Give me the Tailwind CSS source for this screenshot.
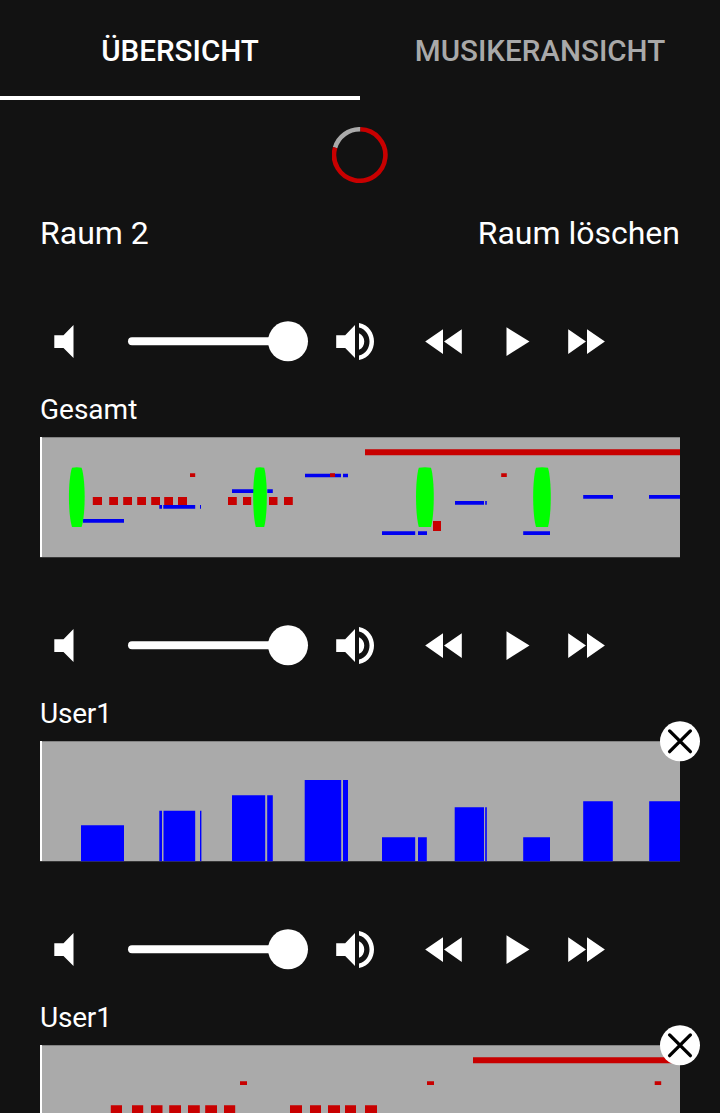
<!DOCTYPE html>
<html lang="de">
<head>
<meta charset="utf-8">
<title>Übersicht</title>
<script src="https://cdn.jsdelivr.net/npm/@tailwindcss/browser@4"></script>
</head>
<body class="bg-[#121212] text-white font-['Roboto',sans-serif] h-[1113px] overflow-hidden">
<svg class="hidden">
  <symbol id="low" viewBox="54 321 20 40"><path d="M54.3 335.2H63.5L73.5 325V358L63.5 348H54.3Z" fill="#fff"/></symbol>
  <symbol id="loud" viewBox="336 321 40 40"><path d="M336.2 335.2H345.2L355 325V358L345.2 348H336.2Z" fill="#fff"/><path d="M359 333.2C366 336 366 347 359 349.8ZM359 323C379 327 379 356 359 360V355.6C373 352 373 331 359 327.4Z" fill="#fff"/></symbol>
  <symbol id="rew" viewBox="425 321 38 40"><path d="M425.2 341.6L443 329.2V354ZM444 341.6L461.8 329.2V354Z" fill="#fff"/></symbol>
  <symbol id="play" viewBox="506 321 24 40"><path d="M506.5 327.2L529.5 341.6L506.5 356Z" fill="#fff"/></symbol>
  <symbol id="fwd" viewBox="568 321 38 40"><path d="M568.2 329.2L586 341.6L568.2 354ZM587 329.2L604.9 341.6L587 354Z" fill="#fff"/></symbol>
  <symbol id="x" viewBox="0 0 40 41"><circle cx="20" cy="20.3" r="20" fill="#fff"/><path d="M9.6 9.9L30.4 30.7M30.4 9.9L9.6 30.7" stroke="#000" stroke-width="3.3" stroke-linecap="round"/></symbol>
</svg>

<nav class="flex h-[100px] text-[29.6px] font-medium leading-[33px]">
  <div class="w-1/2 flex justify-center pt-[35px] border-b-4 border-white"><span>ÜBERSICHT</span></div>
  <div class="w-1/2 flex justify-center pt-[35px] text-[#a9a9a9]"><span>MUSIKERANSICHT</span></div>
</nav>

<main class="px-10">
  <div class="flex justify-center pt-[27px]">
    <svg class="w-14 h-14" viewBox="0 0 56 56" fill="none" stroke-width="4.6">
      <path d="M3.1 20.6A25.7 25.7 0 0 1 28.4 2.3" stroke="#aaa"/>
      <path d="M28.4 2.3A25.7 25.7 0 1 1 3.1 20.6" stroke="#c80000"/>
    </svg>
  </div>
  <header class="flex justify-between mt-[31px] h-[38px] text-[32px] leading-[38px]">
    <span>Raum 2</span><span>Raum löschen</span>
  </header>

  <section class="mt-[69px] h-[304px]">
    <div class="flex h-10 pl-[14px]">
      <svg class="w-5 h-10"><use href="#low"/></svg>
      <div class="ml-[54px] w-[180px] h-10 flex items-center translate-y-[0.3px]"><div class="w-[142px] h-[8.6px] rounded-l-full bg-white"></div><div class="-ml-[2px] size-10 shrink-0 rounded-full bg-white"></div></div>
      <svg class="ml-7 w-10 h-10"><use href="#loud"/></svg>
      <svg class="ml-[49px] w-[38px] h-10"><use href="#rew"/></svg>
      <svg class="ml-[43px] w-6 h-10"><use href="#play"/></svg>
      <svg class="ml-[38px] w-[38px] h-10"><use href="#fwd"/></svg>
    </div>
    <h2 class="mt-8 h-[33px] text-[28px] leading-[33px]">Gesamt</h2>
    <svg class="mt-[11px] block w-[640px] h-[121px]" viewBox="40 437 640 121">
      <path fill="#aaa" d="M40 437.3H680V557.3H40Z"/>
      <path fill="#fff" d="M40 437H42V557H40Z"/>
      <g fill="#0000f0">
        <path d="M83 519H124V522.8H83ZM159.3 505H162V508.8H159.3ZM163.3 505H195.2V508.8H163.3ZM200 505H201V508.8H200ZM232 489.2H265.6V492.9H232ZM267.3 489.2H272.8V492.9H267.3Z"/>
        <path d="M305 473.8H341V477.3H305ZM343 473.8H348V477.3H343ZM382 531.2H415.2V534.9H382ZM418 531.2H427V534.9H418ZM455 501H484V504.7H455ZM485.2 501H486.8V504.7H485.2ZM523.2 531.2H550V534.9H523.2ZM583.2 495H613V498.7H583.2ZM649 495H680V498.7H649Z"/>
      </g>
      <g fill="#c80000">
        <path d="M365 449.2H680V455.2H365ZM190 473.2H195.2V477H190ZM330 473.2H335V477H330ZM501.2 473.2H506.8V477H501.2ZM433 521H441V531H433Z"/>
        <path d="M92.8 497H102V505H92.8ZM109.2 497H118V505H109.2ZM123.2 497H132V505H123.2ZM137.2 497H146V505H137.2ZM151.2 497H160V505H151.2ZM164.2 497H173V505H164.2ZM178 497H187V505H178Z"/>
        <path d="M228 497H236.8V505H228ZM243 497H251.2V505H243ZM269 497H277.5V505H269ZM284 497H292.8V505H284Z"/>
      </g>
      <g fill="#0f0">
        <path d="M72 467.7Q76.8 466.8 81.6 467.7C85.7 480 85.7 514 81.6 527H72C67.9 514 67.9 480 72 467.7Z"/>
        <path d="M255.8 467.7Q260 466.8 264.2 467.7C267.7 480 267.7 514 264.2 527H255.8C252.3 514 252.3 480 255.8 467.7Z"/>
        <path d="M418.8 467.7Q425 466.8 431 467.7C434.7 480 434.7 514 431 527H418.8C415.1 514 415.1 480 418.8 467.7Z"/>
        <path d="M536 467.7Q542 466.8 548 467.7C551.7 480 551.7 514 548 527H536C532.2 514 532.2 480 536 467.7Z"/>
      </g>
    </svg>
  </section>

  <section class="h-[304px]">
    <div class="flex h-10 pl-[14px]">
      <svg class="w-5 h-10"><use href="#low"/></svg>
      <div class="ml-[54px] w-[180px] h-10 flex items-center translate-y-[0.3px]"><div class="w-[142px] h-[8.6px] rounded-l-full bg-white"></div><div class="-ml-[2px] size-10 shrink-0 rounded-full bg-white"></div></div>
      <svg class="ml-7 w-10 h-10"><use href="#loud"/></svg>
      <svg class="ml-[49px] w-[38px] h-10"><use href="#rew"/></svg>
      <svg class="ml-[43px] w-6 h-10"><use href="#play"/></svg>
      <svg class="ml-[38px] w-[38px] h-10"><use href="#fwd"/></svg>
    </div>
    <h2 class="mt-8 h-[33px] text-[28px] leading-[33px] tracking-[-0.2px]">User1</h2>
    <div class="relative mt-[11px]">
      <svg class="block w-[640px] h-[121px]" viewBox="40 741 640 121">
        <path fill="#aaa" d="M40 741.3H680V861.3H40Z"/>
        <path fill="#fff" d="M40 741H42V861H40Z"/>
        <path fill="#00f" d="M81 825.2H124V861.3H81ZM159.3 810.8H162V861.3H159.3ZM163.5 810.8H195.2V861.3H163.5ZM200 810.8H201.4V861.3H200ZM232 795.3H265.2V861.3H232ZM267.2 795.3H272.8V861.3H267.2ZM304.7 780H341.2V861.3H304.7ZM343 780H348V861.3H343Z"/>
        <path fill="#00f" d="M382 837.3H415.2V861.3H382ZM418 837.3H426.8V861.3H418ZM454.7 807.3H484V861.3H454.7ZM485.2 807.3H486.8V861.3H485.2ZM523.2 837.3H550V861.3H523.2ZM583.2 801.3H612.8V861.3H583.2ZM649.2 801.3H680V861.3H649.2Z"/>
      </svg>
      <button class="absolute -right-5 -top-5 w-10 h-[41px]"><svg class="w-10 h-[41px]"><use href="#x"/></svg></button>
    </div>
  </section>

  <section class="h-[184px]">
    <div class="flex h-10 pl-[14px]">
      <svg class="w-5 h-10"><use href="#low"/></svg>
      <div class="ml-[54px] w-[180px] h-10 flex items-center translate-y-[0.3px]"><div class="w-[142px] h-[8.6px] rounded-l-full bg-white"></div><div class="-ml-[2px] size-10 shrink-0 rounded-full bg-white"></div></div>
      <svg class="ml-7 w-10 h-10"><use href="#loud"/></svg>
      <svg class="ml-[49px] w-[38px] h-10"><use href="#rew"/></svg>
      <svg class="ml-[43px] w-6 h-10"><use href="#play"/></svg>
      <svg class="ml-[38px] w-[38px] h-10"><use href="#fwd"/></svg>
    </div>
    <h2 class="mt-8 h-[33px] text-[28px] leading-[33px] tracking-[-0.2px]">User1</h2>
    <div class="relative mt-[11px]">
      <svg class="block w-[640px] h-[68px]" viewBox="40 1045 640 68">
        <path fill="#aaa" d="M40 1045.3H680V1113H40Z"/>
        <path fill="#fff" d="M40 1045H42V1113H40Z"/>
        <path fill="#c80000" d="M473 1057.2H680V1063.2H473ZM240 1081.2H247V1085H240ZM427 1081.2H434V1085H427ZM654.7 1081.2H661.2V1085H654.7Z"/>
        <path fill="#c80000" d="M110.8 1105.2H122V1113H110.8ZM132 1105.2H143.2V1113H132ZM151 1105.2H162.5V1113H151ZM169.2 1105.2H181V1113H169.2ZM188 1105.2H199.8V1113H188ZM205.2 1105.2H217V1113H205.2ZM224 1105.2H235.2V1113H224ZM290 1105.2H302V1113H290ZM310 1105.2H321V1113H310ZM328 1105.2H340V1113H328ZM345 1105.2H356V1113H345ZM365 1105.2H377V1113H365Z"/>
      </svg>
      <button class="absolute -right-5 -top-5 w-10 h-[41px]"><svg class="w-10 h-[41px]"><use href="#x"/></svg></button>
    </div>
  </section>
</main>
</body>
</html>
